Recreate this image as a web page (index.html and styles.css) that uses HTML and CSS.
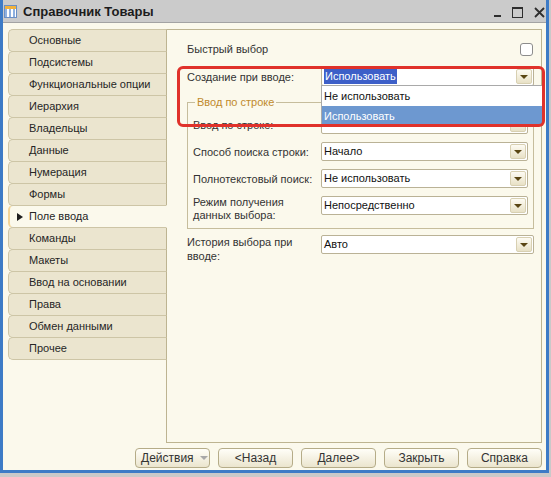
FILE: index.html
```html
<!DOCTYPE html>
<html lang="ru">
<head>
    <meta charset="UTF-8">
    <title>Справочник Товары</title>
    <link rel="stylesheet" href="styles.css">
</head>
<body>
    <div class="window">
        <div class="titlebar">
            <svg class="app-icon" width="13" height="13" viewBox="0 0 13 13">
                <rect x="0.5" y="0.5" width="12" height="12" fill="#ffffff" stroke="#6b8fc4"/>
                <rect x="1" y="1" width="11" height="3" fill="#f2b23c"/>
                <rect x="1" y="4" width="2" height="8" fill="#8fb1e0"/>
                <rect x="5" y="4" width="2" height="8" fill="#8fb1e0"/>
                <rect x="9" y="4" width="2" height="8" fill="#8fb1e0"/>
            </svg>
            <span class="title">Справочник Товары</span>
            <div class="win-controls">
                <svg class="ctl-min" width="8" height="11" viewBox="0 0 8 11">
                    <rect x="0" y="8" width="7" height="2" fill="#2e2e2e"/>
                </svg>
                <svg class="ctl-max" width="11" height="11" viewBox="0 0 11 11">
                    <rect x="0.5" y="1" width="10" height="9.5" fill="none" stroke="#2e2e2e"/>
                    <rect x="0" y="0" width="11" height="2" fill="#2e2e2e"/>
                </svg>
                <svg class="ctl-close" width="11" height="11" viewBox="0 0 11 11">
                    <path d="M1 1 L10 10 M10 1 L1 10" stroke="#2e2e2e" stroke-width="1.8"/>
                </svg>
            </div>
        </div>

        <div class="workspace">
            <div class="main">
                <ul class="tabs">
                    <li class="tab">Основные</li>
                    <li class="tab">Подсистемы</li>
                    <li class="tab">Функциональные опции</li>
                    <li class="tab">Иерархия</li>
                    <li class="tab">Владельцы</li>
                    <li class="tab">Данные</li>
                    <li class="tab">Нумерация</li>
                    <li class="tab">Формы</li>
                    <li class="tab active">Поле ввода</li>
                    <li class="tab">Команды</li>
                    <li class="tab">Макеты</li>
                    <li class="tab">Ввод на основании</li>
                    <li class="tab">Права</li>
                    <li class="tab">Обмен данными</li>
                    <li class="tab">Прочее</li>
                </ul>

                <div class="panel">
                    <div class="check-row">
                        <span class="label">Быстрый выбор</span>
                        <span class="checkbox"></span>
                    </div>

                    <div class="field">
                        <span class="label">Создание при вводе:</span>
                        <div class="combo">
                            <span class="combo-value"><span class="selected-text">Использовать</span></span>
                            <span class="combo-btn"></span>
                            <ul class="dropdown-list">
                                <li>Не использовать</li>
                                <li class="current">Использовать</li>
                            </ul>
                        </div>
                    </div>

                    <fieldset class="group">
                        <legend>Ввод по строке</legend>
                        <div class="field inner first">
                            <span class="label">Ввод по строке:</span>
                            <div class="combo">
                                <span class="combo-value"></span>
                                <span class="combo-btn"></span>
                            </div>
                        </div>
                        <div class="field inner">
                            <span class="label">Способ поиска строки:</span>
                            <div class="combo">
                                <span class="combo-value">Начало</span>
                                <span class="combo-btn"></span>
                            </div>
                        </div>
                        <div class="field inner">
                            <span class="label">Полнотекстовый поиск:</span>
                            <div class="combo">
                                <span class="combo-value">Не использовать</span>
                                <span class="combo-btn"></span>
                            </div>
                        </div>
                        <div class="field inner tall">
                            <span class="label">Режим получения<br>данных выбора:</span>
                            <div class="combo">
                                <span class="combo-value">Непосредственно</span>
                                <span class="combo-btn"></span>
                            </div>
                        </div>
                    </fieldset>

                    <div class="field tall history">
                        <span class="label">История выбора при<br>вводе:</span>
                        <div class="combo">
                            <span class="combo-value">Авто</span>
                            <span class="combo-btn"></span>
                        </div>
                    </div>

                    <div class="highlight"></div>
                </div>
            </div>

            <div class="footer">
                <button class="btn btn-menu">Действия <span class="menu-arrow"></span></button>
                <button class="btn">&lt;Назад</button>
                <button class="btn">Далее&gt;</button>
                <button class="btn">Закрыть</button>
                <button class="btn">Справка</button>
            </div>
        </div>
    </div>
</body>
</html>
```

FILE: styles.css
```css
* {
    box-sizing: border-box;
}

body {
    margin: 0;
    background: #c9c9c9;
    font-family: "Liberation Sans", Arial, sans-serif;
    font-size: 11px;
    color: #2e2e2e;
}

.window {
    width: 549px;
    height: 473px;
    background: #fbf9ec;
    border: 3px solid #3d7bc6;
    border-top: none;
    display: flex;
    flex-direction: column;
}

/* title bar */
.titlebar {
    height: 23px;
    flex: none;
    background: #cbcbcb;
    border-bottom: 1px solid #a3a3a3;
    display: flex;
    align-items: center;
    padding-left: 1px;
}

.app-icon {
    margin-right: 6px;
}

.title {
    font-weight: bold;
    font-size: 13px;
    color: #1c1c1c;
}

.win-controls {
    margin-left: auto;
    display: flex;
    align-items: flex-end;
    align-self: stretch;
    padding: 0 1px 4px 0;
}

.ctl-min {
    margin-right: 10px;
}

.ctl-max {
    margin-right: 11px;
}

/* body */
.workspace {
    flex: 1;
    display: flex;
    flex-direction: column;
    padding: 6px 4px 2px 5px;
}

.main {
    flex: 1;
    display: flex;
}

.tabs {
    list-style: none;
    margin: 0 -1px 0 0;
    padding: 0;
    width: 159px;
    flex: none;
    position: relative;
    z-index: 1;
}

.tab {
    height: 23px;
    margin-bottom: -1px;
    border: 1px solid #cdc5a6;
    border-right-color: #bdb491;
    border-radius: 5px 0 0 5px;
    background: #ebe5cf;
    padding-left: 20px;
    line-height: 21px;
    color: #262626;
    white-space: nowrap;
}

.tab.active {
    position: relative;
    background: #fbf9ec;
    border-left: 2px solid #f4d597;
    border-right-color: #fbf9ec;
    padding-left: 19px;
}

.tab.active::before {
    content: "";
    position: absolute;
    left: 7px;
    top: 7px;
    border-left: 6px solid #1e1e1e;
    border-top: 4px solid transparent;
    border-bottom: 4px solid transparent;
}

.panel {
    flex: 1;
    position: relative;
    border: 1px solid #bdb491;
    padding: 9px 7px 0 20px;
}

.label {
    color: #333;
    line-height: 14px;
}

.check-row {
    height: 19px;
    display: flex;
    align-items: center;
    justify-content: space-between;
}

.checkbox {
    width: 13px;
    height: 13px;
    margin: 2px 1px 0 0;
    background: #fff;
    border: 1px solid #8c8c8c;
    border-radius: 3px;
}

.field {
    display: grid;
    grid-template-columns: 134px 1fr;
    align-items: center;
    margin-top: 9px;
}

.field.inner {
    grid-template-columns: 128px 1fr;
    margin-top: 8px;
}

.field.inner.first {
    margin-top: 0;
}

.field.tall {
    align-items: start;
}

.field.inner.tall .label {
    line-height: 13px;
}

.field.history {
    margin-top: 6px;
}

.combo {
    position: relative;
    height: 19px;
    display: flex;
    background: #fff;
    border: 1px solid #bab296;
    border-radius: 2px;
}

.combo-value {
    flex: 1;
    padding-left: 2px;
    line-height: 17px;
    color: #111;
    white-space: nowrap;
}

.selected-text {
    display: inline-block;
    margin-top: 1px;
    padding: 0 1px;
    line-height: 15px;
    background: #3d5fc8;
    color: #fff;
}

.combo-btn {
    width: 16px;
    margin: 1px;
    border: 1px solid #d8d0b2;
    border-radius: 2px;
    background: linear-gradient(#fdfbf3, #e8e1c6);
    display: flex;
    align-items: center;
    justify-content: center;
}

.combo-btn::after {
    content: "";
    border-top: 4px solid #5a4614;
    border-left: 4px solid transparent;
    border-right: 4px solid transparent;
}

.dropdown-list {
    list-style: none;
    margin: 0;
    padding: 0;
    position: absolute;
    top: 100%;
    left: -1px;
    right: -10px;
    z-index: 2;
    background: #fff;
    border: 1px solid #a9a9a9;
    border-bottom: none;
}

.dropdown-list li {
    height: 20px;
    line-height: 20px;
    padding-left: 2px;
    color: #111;
}

.dropdown-list li.current {
    background: #6d98d0;
    color: #fff;
}

.group {
    margin: 9px 0 0;
    padding: 6px 5px 6px 5px;
    border: 1px solid #c6bd9c;
    min-width: 0;
}

.group legend {
    margin-left: 2px;
    padding: 0 2px;
    line-height: 14px;
    color: #c08a2c;
}

.highlight {
    position: absolute;
    left: 10px;
    top: 36px;
    width: 368px;
    height: 61px;
    border: 3px solid #e0322b;
    border-radius: 6px;
    z-index: 3;
}

/* bottom buttons */
.footer {
    display: flex;
    justify-content: flex-end;
    gap: 8px;
    margin-top: 5px;
}

.btn {
    width: 75px;
    height: 20px;
    padding: 0;
    border: 1px solid #b5ac88;
    border-radius: 4px;
    background: linear-gradient(#fffef8, #ebe5ce);
    font-family: inherit;
    font-size: 12px;
    color: #333;
}

.btn-menu {
    display: flex;
    align-items: center;
    padding-left: 5px;
    gap: 6px;
}

.menu-arrow {
    border-top: 4px solid #a8a8a8;
    border-left: 4px solid transparent;
    border-right: 4px solid transparent;
}
```
